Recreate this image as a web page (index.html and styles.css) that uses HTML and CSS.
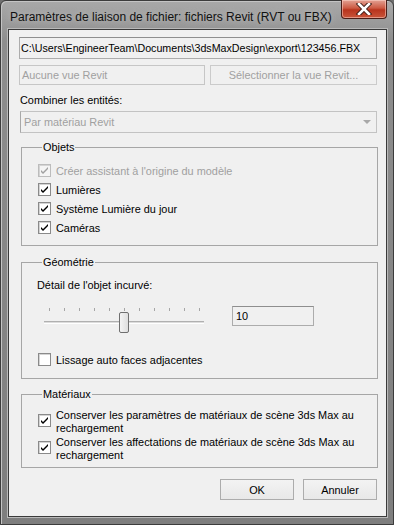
FILE: index.html
```html
<!DOCTYPE html>
<html lang="fr">
<head>
  <meta charset="UTF-8">
  <title>Paramètres de liaison de fichier</title>
  <link rel="stylesheet" href="styles.css">
</head>
<body>
  <div class="window">
    <div class="titlebar">
      <span class="title">Paramètres de liaison de fichier: fichiers Revit (RVT ou FBX)</span>
      <span class="close">
        <svg width="18" height="12" viewBox="0 0 18 12">
          <path d="M4 1 L14 11 M14 1 L4 11" stroke="#3a1a14" stroke-width="4.4" stroke-linecap="square"/>
          <path d="M4 1 L14 11 M14 1 L4 11" stroke="#fff" stroke-width="2.6" stroke-linecap="square"/>
        </svg>
      </span>
    </div>

    <div class="client">
      <div class="field path">C:\Users\EngineerTeam\Documents\3dsMaxDesign\export\123456.FBX</div>

      <div class="row">
        <div class="field view disabled">Aucune vue Revit</div>
        <div class="button wide disabled">Sélectionner la vue Revit...</div>
      </div>

      <div class="label">Combiner les entités:</div>
      <div class="combo disabled">
        <span>Par matériau Revit</span>
        <svg width="8" height="5" viewBox="0 0 8 5"><path d="M0 0 H8 L4 4 Z" fill="#a8a8a8"/></svg>
      </div>

      <fieldset class="group objets">
        <legend>Objets</legend>
        <div class="check disabled"><span class="box on"></span>Créer assistant à l'origine du modèle</div>
        <div class="check"><span class="box on"></span>Lumières</div>
        <div class="check"><span class="box on"></span>Système Lumière du jour</div>
        <div class="check"><span class="box on"></span>Caméras</div>
      </fieldset>

      <fieldset class="group geometrie">
        <legend>Géométrie</legend>
        <div class="sublabel">Détail de l'objet incurvé:</div>
        <div class="slider-row">
          <div class="slider">
            <div class="ticks">
              <i></i><i></i><i></i><i></i><i></i><i></i><i></i><i></i><i></i><i></i><i></i>
            </div>
            <div class="track"></div>
            <div class="thumb" style="left: 75px"></div>
          </div>
          <div class="field number">10</div>
        </div>
        <div class="check lissage"><span class="box"></span>Lissage auto faces adjacentes</div>
      </fieldset>

      <fieldset class="group materiaux">
        <legend>Matériaux</legend>
        <div class="check multi"><span class="box on"></span><span class="text">Conserver les paramètres de matériaux de scène 3ds Max au rechargement</span></div>
        <div class="check multi"><span class="box on"></span><span class="text">Conserver les affectations de matériaux de scène 3ds Max au rechargement</span></div>
      </fieldset>

      <div class="actions">
        <div class="button">OK</div>
        <div class="button">Annuler</div>
      </div>
    </div>
  </div>
</body>
</html>
```

FILE: styles.css
```css
body {
  margin: 0;
  background: #6f6f6f;
  font-family: "Liberation Sans", Arial, sans-serif;
  font-size: 10.9px;
  color: #000;
}
.window {
  width: 394px;
  height: 525px;
  box-sizing: border-box;
  border: 1px solid #3c3c3c;
  border-radius: 6px 6px 0 0;
  background: linear-gradient(#a9a9a9, #8e8e8e 40px, #7e7e7e);
  box-shadow: inset 1px 1px 0 #c4c4c4;
  padding: 0 6px 0 7px;
}
.titlebar {
  height: 28px;
  display: flex;
  justify-content: space-between;
}
.title {
  font-size: 12px;
  color: #111;
  padding: 9px 0 0 2px;
  text-shadow: 0 0 6px #c8c8c8;
}
.close {
  width: 44px;
  height: 18px;
  margin-top: -1px;
  border: 1px solid #4a1e18;
  border-top: none;
  border-radius: 0 0 4px 4px;
  background: linear-gradient(#e3a294, #cc5a43 45%, #b8341d 55%, #c9553a);
  box-shadow: inset 0 0 0 1px rgba(255, 220, 210, 0.5);
  display: flex;
  align-items: center;
  justify-content: center;
}
.client {
  height: 488px;
  box-sizing: border-box;
  border: 1px solid #3a3a3a;
  outline: 1px solid #b9b9b9;
  background: #f0f0f0;
  padding: 7px 9px 0 10px;
}
.field {
  box-sizing: border-box;
  border: 1px solid #acacac;
  border-top-color: #8e8e8e;
  background: #f0f0f0;
  padding-left: 2px;
  display: flex;
  align-items: center;
  white-space: nowrap;
  overflow: hidden;
}
.path {
  height: 22px;
  padding-left: 1px;
  font-size: 10.7px;
}
.row {
  margin-top: 6px;
  display: flex;
  gap: 5px;
  height: 20px;
}
.view {
  width: 186px;
  border-color: #c6c6c6;
}
.disabled {
  color: #a0a0a0;
}
.button {
  box-sizing: border-box;
  height: 21px;
  width: 74px;
  border: 1px solid #acacac;
  background: linear-gradient(#f3f3f3, #e8e8e8);
  display: flex;
  align-items: center;
  justify-content: center;
}
.button.wide {
  flex: 1;
  height: 20px;
  border-color: #cbcbcb;
  background: #f0f0f0;
}
.label {
  margin-top: 8px;
  line-height: 14px;
  padding-left: 1px;
}
.combo {
  margin: 4px 0 0 1px;
  height: 22px;
  box-sizing: border-box;
  border: 1px solid #c3c3c3;
  border-left-color: #a8a8a8;
  display: flex;
  align-items: center;
  justify-content: space-between;
  padding: 0 5px 0 3px;
}
.group {
  margin: 7px -1px 0 2px;
  padding: 7px 0 8px 15px;
  border: 1px solid #a6a6a6;
  min-width: 0;
}
.group legend {
  padding: 0 1px;
  margin-left: 5px;
  line-height: 14px;
}
.check {
  height: 19px;
  display: flex;
  align-items: center;
  gap: 5px;
}
.box {
  width: 13px;
  height: 13px;
  box-sizing: border-box;
  border: 1px solid #8a8a8a;
  background: #fff;
  box-shadow: inset 1px 1px 0 #d4d4d4;
  flex: none;
  position: relative;
}
.box.on::after {
  content: "";
  position: absolute;
  left: 2px;
  top: 2px;
  width: 7px;
  height: 7px;
  background: url("data:image/svg+xml;utf8,<svg xmlns='http://www.w3.org/2000/svg' width='7' height='7'><path d='M0 3 L2 5 L7 0 L7 2 L2 7 L0 5 Z' fill='black'/></svg>");
}
.check.disabled .box {
  border-color: #bcbcbc;
  background: #f4f4f4;
}
.check.disabled .box.on::after {
  background: url("data:image/svg+xml;utf8,<svg xmlns='http://www.w3.org/2000/svg' width='7' height='7'><path d='M0 3 L2 5 L7 0 L7 2 L2 7 L0 5 Z' fill='%23a0a0a0'/></svg>");
}
.geometrie {
  margin-top: 9px;
  padding-bottom: 9px;
}
.sublabel {
  margin-top: 2px;
  line-height: 14px;
}
.slider-row {
  margin-top: 14px;
  display: flex;
  gap: 28px;
  height: 29px;
}
.slider {
  width: 160px;
  margin-left: 7px;
  position: relative;
  padding-top: 2px;
}
.ticks {
  display: flex;
  justify-content: space-between;
  padding: 0 4px 0 5px;
  height: 3px;
}
.ticks i {
  width: 1px;
  background: #a6a6a6;
}
.track {
  margin-top: 10px;
  height: 3px;
  box-sizing: border-box;
  border-top: 1px solid #b0b0b0;
  border-bottom: 1px solid #ffffff;
  background: #dcdcdc;
}
.thumb {
  position: absolute;
  top: 6px;
  width: 10px;
  height: 21px;
  box-sizing: border-box;
  border: 1px solid #6f6f6f;
  border-radius: 2px;
  background: linear-gradient(90deg, #f4f4f4, #dedede);
}
.number {
  width: 82px;
  height: 20px;
  align-self: flex-start;
  padding-left: 3px;
}
.lissage {
  margin-top: 15px;
  margin-left: 1px;
}
.objets .check {
  margin-left: 1px;
}
.materiaux {
  margin-top: 8px;
  padding-top: 8px;
  padding-bottom: 4px;
}
.check.multi {
  height: auto;
  align-items: flex-start;
  line-height: 12.5px;
  margin-left: 1px;
  margin-bottom: 2px;
}
.check.multi .text {
  max-width: 312px;
}
.check.multi .box {
  margin-top: 5px;
}
.actions {
  margin-top: 11px;
  display: flex;
  justify-content: flex-end;
  gap: 9px;
}
```
